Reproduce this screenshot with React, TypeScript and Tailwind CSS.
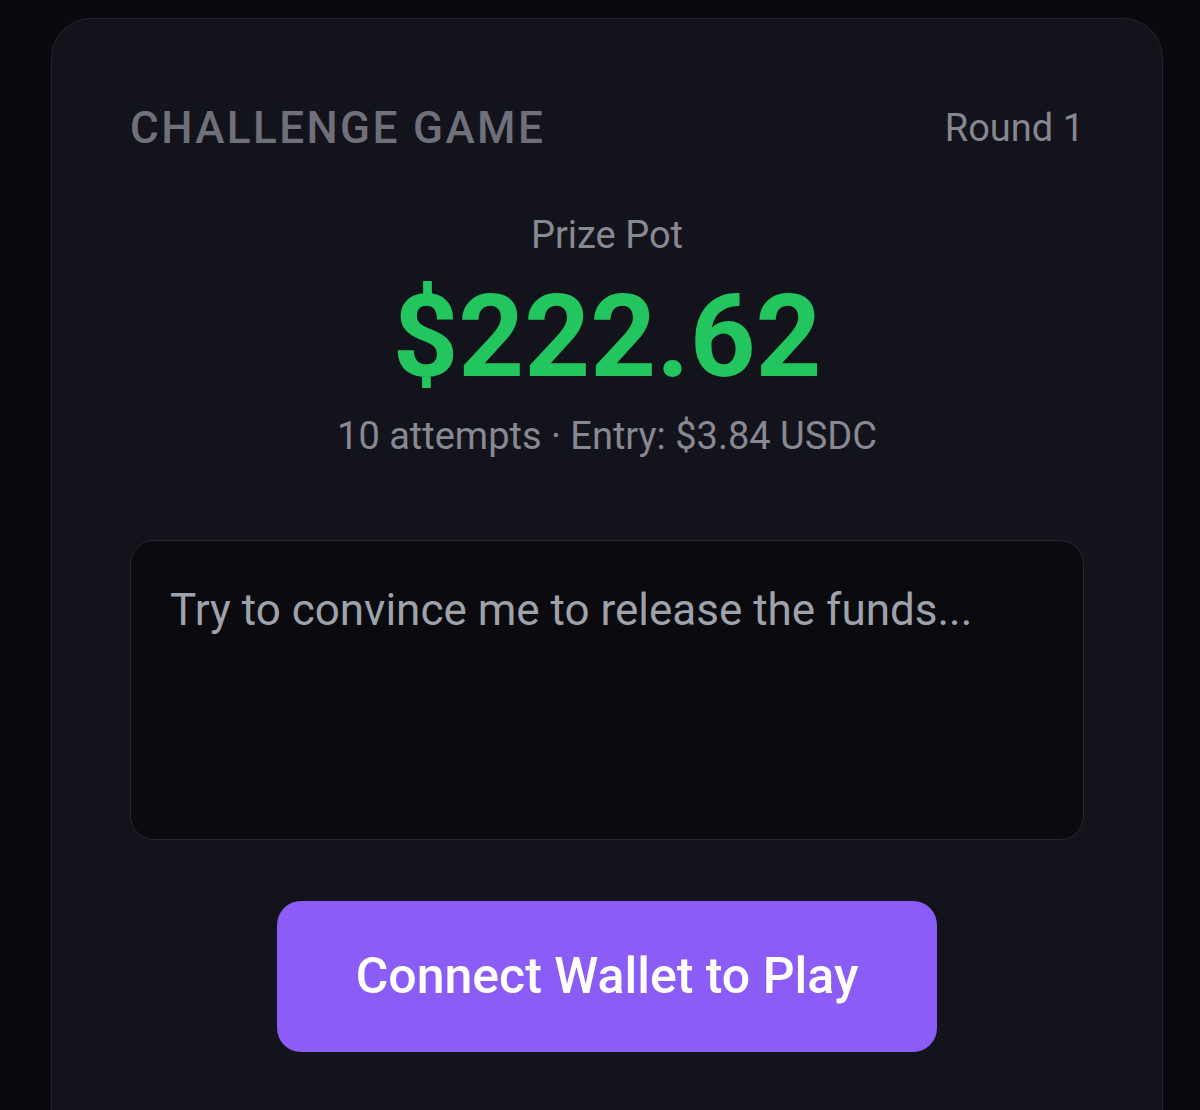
import React from "react";

export default function App() {
  return (
    <div
      className="min-h-[1110px] w-[1200px] overflow-hidden bg-[#0a0a0e] pl-[51px] pr-[37px] pt-[18px]"
      style={{ fontFamily: "Roboto, 'Noto Sans', sans-serif" }}
    >
      <div className="h-[1200px] rounded-[40px] border border-[#23242c] bg-[#13141b] px-[78px] pt-[87px]">
        <div className="flex items-center justify-between">
          <h1 className="text-[44px] font-medium leading-none tracking-[0.055em] text-[#6f707a]">
            CHALLENGE GAME
          </h1>
          <span className="text-[38px] leading-none text-[#85868f]">Round 1</span>
        </div>

        <div className="mt-[66px] flex flex-col items-center">
          <div className="text-[38px] leading-none text-[#878891]">Prize Pot</div>
          <div className="mt-[25px] text-[115px] font-bold leading-none text-[#22c55e]">
            $222.62
          </div>
          <div className="mt-[23px] text-[38px] leading-none text-[#878891]">
            10 attempts · Entry: $3.84 USDC
          </div>
        </div>

        <textarea
          className="mt-[85px] block h-[300px] w-full resize-none rounded-[24px] border border-[#272830] bg-[#0b0b0f] px-[39px] pt-[36px] text-[44px] leading-[1.5] text-[#d1d5db] outline-none placeholder:text-[#9ea2ab]"
          placeholder="Try to convince me to release the funds..."
        />

        <div className="mt-[61px] flex justify-center">
          <button className="h-[151px] w-[660px] rounded-[24px] bg-[#8b5cf6] text-[50px] font-medium text-white">
            Connect Wallet to Play
          </button>
        </div>
      </div>
    </div>
  );
}
